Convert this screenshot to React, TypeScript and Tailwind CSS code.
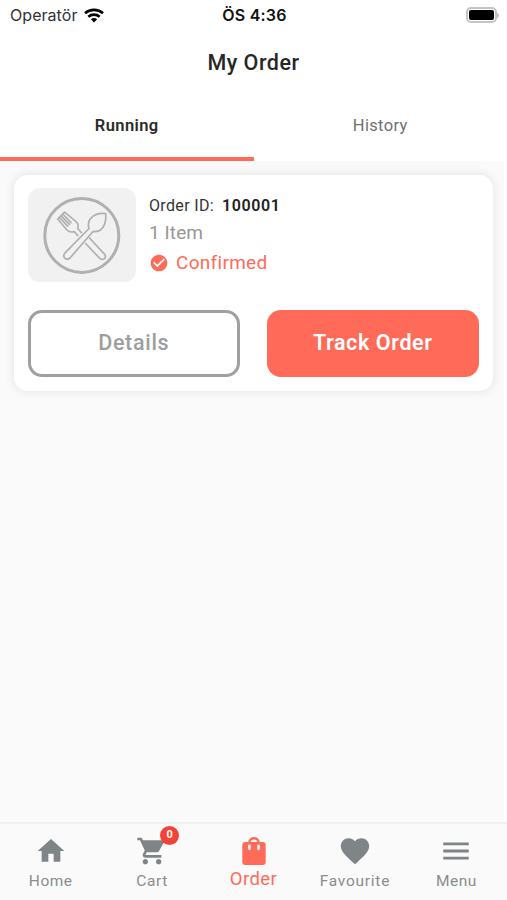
import type { ReactNode } from "react";
import { MdCheckCircle, MdFavorite, MdHome, MdMenu, MdShoppingCart } from "react-icons/md";

const navItems = [
    { label: "Home", icon: <MdHome className="size-[32px]" />, text: "text-[15.5px] tracking-[0.5px]" },
    { label: "Cart", icon: <MdShoppingCart className="size-[32px]" />, text: "text-[15.5px] tracking-[0.65px]", badge: 0 },
    { label: "Order", icon: <BagIcon />, text: "text-[18.5px] tracking-[0.4px]", active: true },
    { label: "Favourite", icon: <MdFavorite className="size-[34px]" />, text: "text-[15.5px] tracking-[0.75px]" },
    { label: "Menu", icon: <MdMenu className="size-[34px]" />, text: "text-[15.5px] tracking-[0.5px]" },
];

function WifiIcon() {
    return (
        <svg viewBox="0 0 20 15" className="h-[15px] w-[20px]" fill="none" stroke="#000" strokeWidth="2.6">
            <path d="M1 5.2C6 .7 14 .7 19 5.2" />
            <path d="M4.3 8.8c3.3-2.9 8.1-2.9 11.4 0" />
            <path d="M10 14.4 6.9 11.2c1.8-1.5 4.4-1.5 6.2 0Z" fill="#000" stroke="none" />
        </svg>
    );
}

function BatteryIcon() {
    return (
        <div className="flex items-center">
            <div className="h-[16px] w-[31px] rounded-[5px] border-2 border-[#c4c4c4] p-[1px]">
                <div className="h-full rounded-[2px] bg-black" />
            </div>
            <div className="h-[5px] w-[2px] rounded-r-full bg-[#c4c4c4]" />
        </div>
    );
}

function BagIcon() {
    return (
        <svg viewBox="0 0 24 28" className="h-[28px] w-[24px]">
            <path d="M7.4 7V5.2a4.6 4 0 0 1 9.2 0V7" fill="none" stroke="#ff6b58" strokeWidth="2.4" />
            <rect x=".3" y="5" width="23.4" height="23" rx="3" fill="#ff6b58" />
            <path d="M7.4 8.8v3M16.6 8.8v3" stroke="#fafafa" strokeWidth="2.7" strokeLinecap="round" />
        </svg>
    );
}

function PlateIcon() {
    return (
        <svg viewBox="0 0 108 94" className="h-[94px] w-[108px]" fill="none" stroke="#b0b0b0" strokeLinecap="round" strokeLinejoin="round">
            <circle cx="53.8" cy="47.4" r="37" strokeWidth="3" />
            <g strokeWidth="1.7">
                <path d="M61 40.5 36.800 65.200c-2.800 3.700 1.200 7.800 5 5L65 43.500c3.800.6 6.700-.5 8.800-2.800 3.500-3.700 4.400-8.700 3.900-15-6.700-1.100-11.600 1-15 4.600-2.500 2.900-2.800 6.500-1.700 10.200Z" />
                <path d="m57.600 55.500 14.200 14.900c3.800 2.700 7.300-.8 4.600-4.300L61.500 50" />
                <path d="m53.400 44.600-3.700-4.100c1.100-3.400.3-5.300-1.900-7.100L36.600 24.200 29.700 31l9.200 11c2.200 2.200 4.500 2.400 7.400 1.600l3.500 4" />
                <path d="m34.800 26 8.200 8.700M33.100 27.700l8.300 8.700M31.400 29.400l8.300 8.700" />
            </g>
        </svg>
    );
}

function Tab({ active, children }: { active?: boolean; children: ReactNode }) {
    return (
        <div
            className={
                active
                    ? "flex flex-1 items-center justify-center border-b-4 border-[#ff6b58] pt-[2px] text-[16.5px] font-semibold tracking-[0.4px] text-[#2b2b2b]"
                    : "flex flex-1 items-center justify-center border-b-4 border-transparent pt-[2px] text-[16.5px] tracking-[0.35px] text-[#707070]"
            }
        >
            {children}
        </div>
    );
}

export default function App() {
    return (
        <div className="h-[900px] w-[507px] overflow-hidden bg-white font-['Roboto',sans-serif]">
            <div className="flex h-full flex-col">
                <header className="flex h-[161px] flex-col bg-white">
                    <div className="grid h-[30px] grid-cols-[1fr_auto_1fr] items-center pr-[8px] pl-[10px] font-['Inter',sans-serif] text-[16px] text-[#111]">
                        <div className="flex items-center gap-[7px]">
                            <span className="tracking-[0.05px] text-[#333]">Operatör</span>
                            <WifiIcon />
                        </div>
                        <span className="font-semibold tracking-[0.2px]">ÖS 4:36</span>
                        <div className="flex justify-end">
                            <BatteryIcon />
                        </div>
                    </div>
                    <h1 className="flex h-[64px] items-center justify-center pt-[2px] text-[21.5px] font-medium tracking-[0.5px] text-[#262626]">
                        My Order
                    </h1>
                    <div className="flex flex-1">
                        <Tab active>Running</Tab>
                        <Tab>History</Tab>
                    </div>
                </header>

                <main className="mr-[3px] flex-1 bg-[#fafafa] pt-[14px] pl-[14px]">
                    <section className="h-[216px] w-[479px] rounded-[14px] bg-white px-[14px] pt-[13px] shadow-[0_0_9px_2px_rgba(0,0,0,0.07)]">
                        <div className="flex gap-[13px]">
                            <div className="h-[94px] w-[108px] rounded-[12px] bg-[#f1f1f1]">
                                <PlateIcon />
                            </div>
                            <div className="flex flex-col pt-[4px]">
                                <p className="flex h-[28px] items-center gap-[8px] text-[16px] text-[#333]">
                                    <span className="tracking-[0.35px]">Order ID:</span>
                                    <span className="font-semibold tracking-[0.6px] text-[#222]">100001</span>
                                </p>
                                <p className="flex h-[27px] items-center text-[19px] tracking-[0.1px] text-[#969696]">1 Item</p>
                                <p className="flex h-[32px] items-center gap-[7px] text-[19px] tracking-[0.3px] text-[#ff6b58]">
                                    <MdCheckCircle className="size-[20px]" />
                                    Confirmed
                                </p>
                            </div>
                        </div>
                        <div className="mt-[28px] flex gap-[27px]">
                            <button className="h-[67px] w-[212px] rounded-[14px] border-3 border-[#a0a0a0] text-[21.5px] font-medium tracking-[0.7px] text-[#9e9e9e]">
                                Details
                            </button>
                            <button className="h-[67px] w-[213px] rounded-[14px] bg-[#ff6b58] text-[21.5px] font-semibold tracking-[0.6px] text-white">
                                Track Order
                            </button>
                        </div>
                    </section>
                </main>

                <nav className="flex h-[78px] border-t-2 border-[#f0f0f0] bg-[#fafafa]">
                    {navItems.map((item) => (
                        <div
                            key={item.label}
                            className={item.active ? "flex flex-1 flex-col items-center pt-[11px] text-[#ff6b58]" : "flex flex-1 flex-col items-center pt-[11px] text-[#7f8486]"}
                        >
                            <div className="relative flex h-[32px] items-center justify-center">
                                {item.icon}
                                {item.badge !== undefined && (
                                    <span className="absolute -top-[9px] -right-[11px] flex size-[19px] items-center justify-center rounded-full bg-[#f44336] text-[11px] font-bold text-white">
                                        {item.badge}
                                    </span>
                                )}
                            </div>
                            <span className={item.active ? `${item.text} leading-[24px]` : `${item.text} leading-[28px] text-[#8c8c8c]`}>
                                {item.label}
                            </span>
                        </div>
                    ))}
                </nav>
            </div>
        </div>
    );
}
